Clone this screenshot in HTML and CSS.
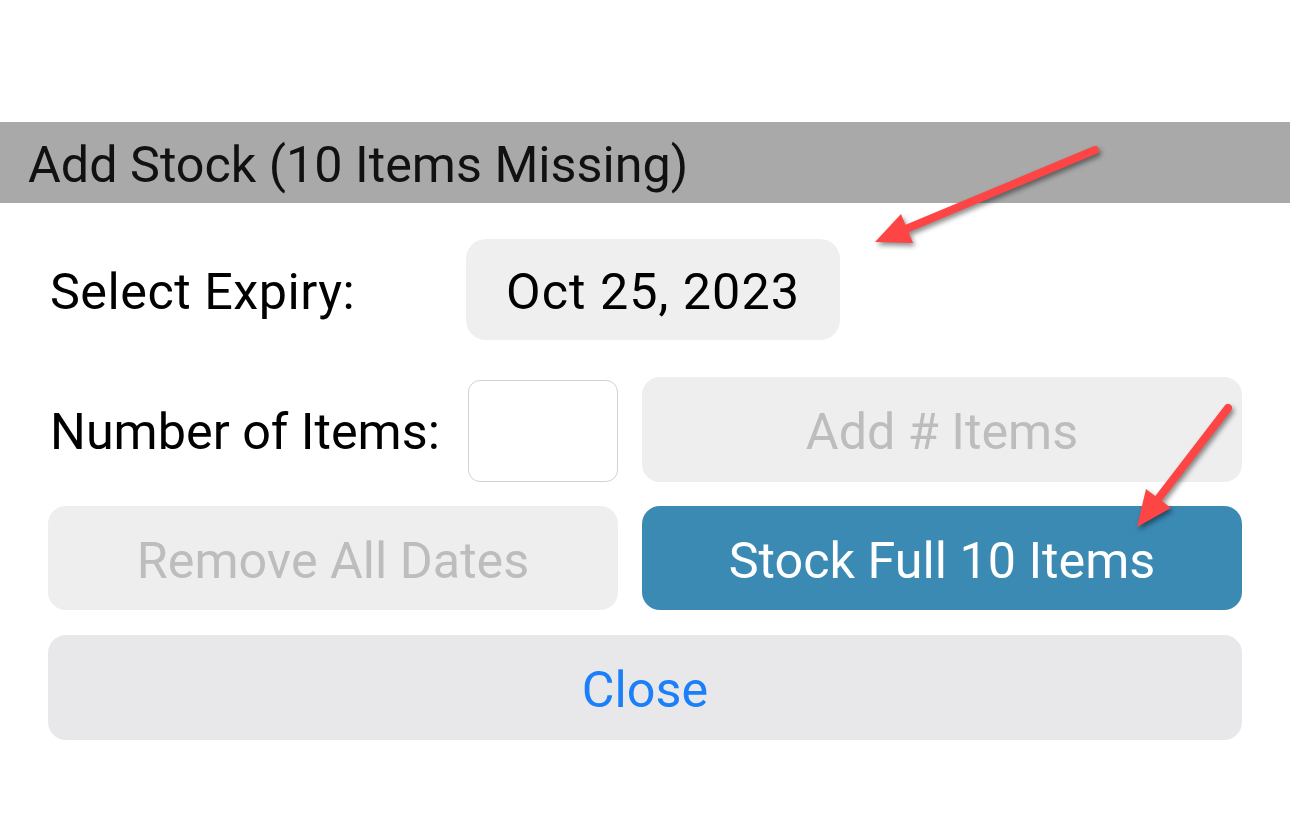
FILE: index.html
```html
<!DOCTYPE html>
<html lang="en">
<head>
<meta charset="utf-8">
<title>Add Stock</title>
<link rel="stylesheet" href="styles.css">
</head>
<body>
<div class="page">
  <div class="header">Add Stock (10 Items Missing)</div>
  <div class="content">
    <div class="row-expiry">
      <div class="label">Select Expiry:</div>
      <div class="date-btn">Oct 25, 2023</div>
    </div>
    <div class="grid">
      <div class="items-cell">
        <div class="label">Number of Items:</div>
        <div class="count-input"></div>
      </div>
      <div class="btn btn-disabled btn-add">Add # Items</div>
      <div class="btn btn-disabled">Remove All Dates</div>
      <div class="btn btn-primary">Stock Full 10 Items</div>
    </div>
    <div class="btn btn-close">Close</div>
  </div>
  <svg class="arrows" width="1290" height="828" viewBox="0 0 1290 828" xmlns="http://www.w3.org/2000/svg">
    <g class="arrow">
      <line x1="1095" y1="150" x2="900" y2="231.5" stroke="#fd4545" stroke-width="8" stroke-linecap="round"/>
      <polygon points="875,242 901,214 913,243" fill="#fd4545"/>
    </g>
    <g class="arrow">
      <line x1="1228" y1="408" x2="1155" y2="503" stroke="#fd4545" stroke-width="8" stroke-linecap="round"/>
      <polygon points="1137,527 1146,489 1171,508" fill="#fd4545"/>
    </g>
  </svg>
</div>
</body>
</html>
```

FILE: styles.css
```css
html, body {
  margin: 0;
  padding: 0;
  background: #ffffff;
}

.page {
  position: relative;
  width: 1290px;
  height: 828px;
  overflow: hidden;
  font-family: Roboto, "Liberation Sans", Arial, sans-serif;
  font-size: 50.3px;
  color: #000;
  padding-top: 122px;
  box-sizing: border-box;
}

.header {
  height: 81px;
  box-sizing: border-box;
  padding-top: 3px;
  background: #a9a9a9;
  display: flex;
  align-items: center;
  padding-left: 28px;
  color: #111;
}

.content {
  padding: 36px 48px 0 48px;
}

.row-expiry {
  display: flex;
  align-items: center;
  height: 101px;
}

.label {
  padding-left: 2px;
  padding-top: 3px;
  white-space: nowrap;
}

.row-expiry .label {
  width: 416px;
  letter-spacing: 0.5px;
}

.date-btn {
  width: 374px;
  height: 101px;
  box-sizing: border-box;
  padding-top: 3px;
  border-radius: 20px;
  background: #efefef;
  display: flex;
  align-items: center;
  justify-content: center;
  letter-spacing: 1px;
}

.grid {
  margin-top: 37px;
  display: grid;
  grid-template-columns: 570px 600px;
  column-gap: 24px;
  row-gap: 24px;
}

.items-cell {
  display: flex;
  align-items: center;
  justify-content: space-between;
  padding-top: 3px;
}

.items-cell .label {
  margin-top: -3px;
}

.count-input {
  width: 148px;
  height: 100px;
  border: 1px solid #d2d2d2;
  border-radius: 12px;
  background: #fff;
}

.btn {
  display: flex;
  align-items: center;
  justify-content: center;
  height: 104px;
  box-sizing: border-box;
  padding-top: 4px;
  border-radius: 18px;
  white-space: nowrap;
}

.btn-add {
  height: 105px;
}

.btn-disabled {
  background: #eeeeee;
  color: #bdbdbd;
}

.btn-primary {
  background: #3a8ab4;
  color: #ffffff;
}

.btn-close {
  margin-top: 25px;
  height: 105px;
  background: #e8e8ea;
  color: #1a7ff8;
}

.arrows {
  position: absolute;
  left: 0;
  top: 0;
  pointer-events: none;
}

.arrow {
  filter: drop-shadow(2px 3px 2.5px rgba(0, 0, 0, 0.45));
}
```
